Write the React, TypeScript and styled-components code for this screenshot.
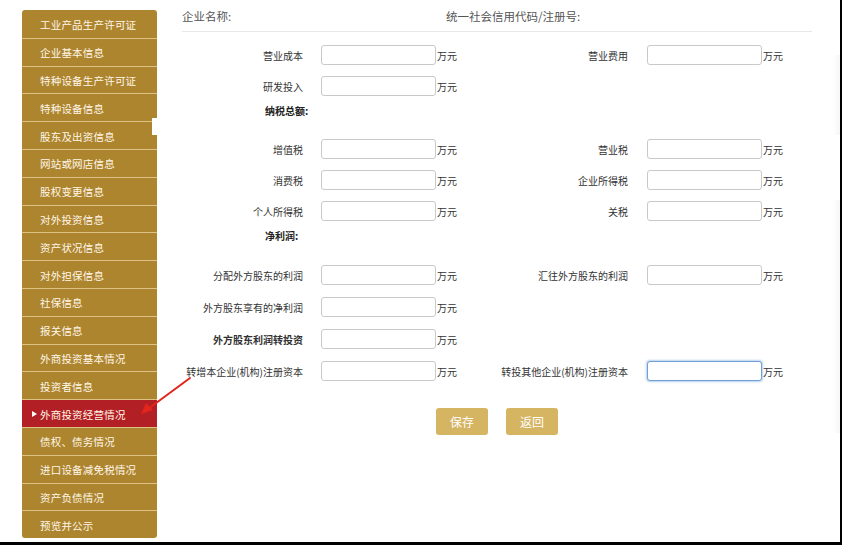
import React from 'react';
import styled, { createGlobalStyle } from 'styled-components';

const FONT = '"Noto Sans CJK SC", "Liberation Sans", sans-serif';

const GlobalStyle = createGlobalStyle`
  body {
    margin: 0;
    background: #fff;
    font-family: ${FONT};
  }
`;

const MENU = [
  '工业产品生产许可证',
  '企业基本信息',
  '特种设备生产许可证',
  '特种设备信息',
  '股东及出资信息',
  '网站或网店信息',
  '股权变更信息',
  '对外投资信息',
  '资产状况信息',
  '对外担保信息',
  '社保信息',
  '报关信息',
  '外商投资基本情况',
  '投资者信息',
  '外商投资经营情况',
  '债权、债务情况',
  '进口设备减免税情况',
  '资产负债情况',
  '预览并公示',
];

const ACTIVE = 14;

type Field = { label: string; strong?: boolean; focused?: boolean };
type Block =
  | { kind: 'row'; left: Field; right?: Field; loose?: boolean }
  | { kind: 'title'; text: string; tall?: boolean };

const FORM: Block[] = [
  { kind: 'row', left: { label: '营业成本' }, right: { label: '营业费用' } },
  { kind: 'row', left: { label: '研发投入' } },
  { kind: 'title', text: '纳税总额:' },
  { kind: 'row', left: { label: '增值税' }, right: { label: '营业税' } },
  { kind: 'row', left: { label: '消费税' }, right: { label: '企业所得税' } },
  { kind: 'row', left: { label: '个人所得税' }, right: { label: '关税' } },
  { kind: 'title', text: '净利润:', tall: true },
  { kind: 'row', left: { label: '分配外方股东的利润' }, right: { label: '汇往外方股东的利润' }, loose: true },
  { kind: 'row', left: { label: '外方股东享有的净利润' }, loose: true },
  { kind: 'row', left: { label: '外方股东利润转投资', strong: true }, loose: true },
  {
    kind: 'row',
    left: { label: '转增本企业(机构)注册资本' },
    right: { label: '转投其他企业(机构)注册资本', focused: true },
    loose: true,
  },
];

const Frame = styled.div`
  position: relative;
  display: flex;
  width: 840px;
  height: 542px;
  border-right: 2px solid #000;
  border-bottom: 3px solid #000;
  background: #fff;
  overflow: hidden;
`;

const Sidebar = styled.nav`
  position: relative;
  align-self: flex-start;
  flex: none;
  width: 135px;
  margin: 10px 0 0 22px;
  background: #ad852f;
  border-radius: 3px;
`;

const MenuItem = styled.div<{ $active?: boolean }>`
  position: relative;
  display: flex;
  align-items: center;
  box-sizing: border-box;
  height: 27.8px;
  padding: 1px 0 0 18px;
  border-top: 1px solid #dcc383;
  background: ${p => (p.$active ? '#b21f24' : 'transparent')};
  color: #fff7e8;
  font-size: 10.5px;
  letter-spacing: 0.2px;

  &:first-child {
    border-top: none;
    border-radius: 3px 3px 0 0;
  }
  &:last-child {
    border-radius: 0 0 3px 3px;
  }
`;

const Caret = styled.span`
  position: absolute;
  left: 10px;
  top: 50%;
  margin-top: -3px;
  border-left: 5px solid #fff;
  border-top: 3.5px solid transparent;
  border-bottom: 3.5px solid transparent;
`;

// small white tab sitting on the sidebar's right edge
const Notch = styled.div`
  position: absolute;
  right: 0;
  top: 108px;
  width: 5px;
  height: 17px;
  background: #fff;
`;

const Main = styled.main`
  flex: none;
  width: 630px;
  margin-left: 25px;
`;

const Header = styled.header`
  display: grid;
  grid-template-columns: 264px auto;
  align-items: center;
  height: 32px;
  padding-top: 1px;
  box-sizing: border-box;
  border-bottom: 1px solid #e8e8e8;
  color: #555;
  font-size: 11.5px;
`;

const Form = styled.div`
  padding-top: 13px;
`;

const Row = styled.div<{ $loose?: boolean }>`
  display: grid;
  grid-template-columns: 139px 115px 30px 181px 115px 30px;
  align-items: center;
  height: 20px;
  margin-bottom: ${p => (p.$loose ? 12 : 11)}px;
`;

const Label = styled.label<{ $gap: number; $strong?: boolean }>`
  padding-right: ${p => p.$gap}px;
  text-align: right;
  white-space: nowrap;
  color: #333;
  font-size: 10px;
  font-weight: ${p => (p.$strong ? 600 : 400)};
`;

const Input = styled.input<{ $focused?: boolean }>`
  box-sizing: border-box;
  width: 115px;
  height: 20px;
  margin: 0;
  padding: 0 4px;
  border: 1px solid ${p => (p.$focused ? '#6f9fd4' : '#c9c9c9')};
  border-radius: 3px;
  background: #fff;
  box-shadow: ${p => (p.$focused ? '0 0 2px 1px rgba(96, 150, 214, 0.45)' : 'none')};
  outline: none;
`;

const Unit = styled.span`
  padding-left: 1px;
  color: #333;
  font-size: 10px;
`;

const Title = styled.div<{ $tall?: boolean }>`
  height: ${p => (p.$tall ? 35 : 34)}px;
  margin-top: -2px;
  padding-left: 83px;
  line-height: 12px;
  color: #222;
  font-size: 10px;
  font-weight: 700;
`;

const Actions = styled.div`
  display: flex;
  justify-content: center;
  gap: 18px;
  margin-top: 27px;
`;

const Button = styled.button`
  box-sizing: border-box;
  width: 52px;
  height: 27px;
  padding: 0;
  border: none;
  border-radius: 3px;
  background: #d5b462;
  color: #fff;
  font-family: "Liberation Serif", "Noto Sans CJK SC", serif;
  font-size: 12px;
`;

const Edge = styled.div`
  flex: 1;
  display: flex;
  flex-direction: column;
  align-items: flex-end;
`;

const Shade = styled.div<{ $top: number; $height: number }>`
  width: 7px;
  height: ${p => p.$height}px;
  margin-top: ${p => p.$top}px;
  background: linear-gradient(to right, rgba(0, 0, 0, 0), rgba(0, 0, 0, 0.035));
`;

// red pointer drawn over the menu
const Pointer = styled.svg`
  position: absolute;
  left: 136px;
  top: 372px;
  pointer-events: none;
`;

const FieldCells: React.FC<{ field: Field; gap: number }> = ({ field, gap }) => (
  <>
    <Label $gap={gap} $strong={field.strong}>{field.label}</Label>
    <Input $focused={field.focused} />
    <Unit>万元</Unit>
  </>
);

const App: React.FC = () => (
  <Frame>
    <GlobalStyle />
    <Sidebar>
      {MENU.map((item, i) => (
        <MenuItem key={item} $active={i === ACTIVE}>
          {i === ACTIVE && <Caret />}
          {item}
        </MenuItem>
      ))}
      <Notch />
    </Sidebar>

    <Main>
      <Header>
        <span>企业名称:</span>
        <span>统一社会信用代码/注册号:</span>
      </Header>
      <Form>
        {FORM.map((block, i) =>
          block.kind === 'title' ? (
            <Title key={i} $tall={block.tall}>{block.text}</Title>
          ) : (
            <Row key={i} $loose={block.loose}>
              <FieldCells field={block.left} gap={18} />
              {block.right && <FieldCells field={block.right} gap={19} />}
            </Row>
          ),
        )}
        <Actions>
          <Button>保存</Button>
          <Button>返回</Button>
        </Actions>
      </Form>
    </Main>

    <Edge>
      <Shade $top={55} $height={80} />
      <Shade $top={65} $height={233} />
    </Edge>

    <Pointer width="60" height="48" viewBox="0 0 60 48">
      <line x1="54" y1="6" x2="12" y2="37" stroke="#e3251c" strokeWidth="2" strokeLinecap="round" />
      <polygon points="5,42 10,31 17,38" fill="#e3251c" />
    </Pointer>
  </Frame>
);

export default App;
